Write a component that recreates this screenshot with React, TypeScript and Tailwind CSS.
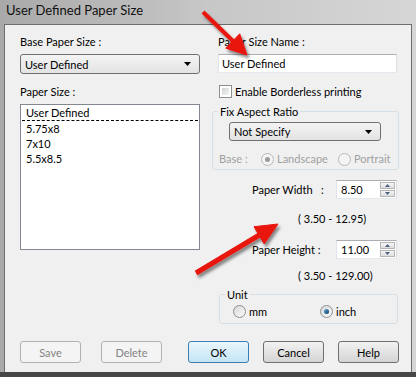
import React from 'react';

const font = { fontFamily: 'Lato, "Noto Sans", sans-serif' };

function DownTriangle() {
  return (
    <svg width="7" height="4" viewBox="0 0 7 4">
      <polygon points="0,0 7,0 3.5,4" fill="#000" />
    </svg>
  );
}

function ComboBox({ value, className }: { value: string; className: string }) {
  return (
    <div
      className={`flex items-center justify-between rounded-[3px] border border-[#707070] bg-gradient-to-b from-[#f4f4f4] to-[#e3e3e3] pl-[4px] pr-[8px] ${className}`}
    >
      <span className="leading-[15px]">{value}</span>
      <DownTriangle />
    </div>
  );
}

function Radio({ checked, disabled }: { checked?: boolean; disabled?: boolean }) {
  return (
    <span
      className={`flex h-[13px] w-[13px] shrink-0 items-center justify-center rounded-full border ${
        disabled ? 'border-[#b8b8b8] bg-[#f4f4f4]' : 'border-[#8e8f8f] bg-gradient-to-br from-[#d6d8da] to-[#fbfbfb]'
      }`}
    >
      {checked && (
        <span
          className={`h-[5px] w-[5px] rounded-full ${
            disabled ? 'bg-[#9a9a9a]' : 'bg-gradient-to-br from-[#5fa8d6] to-[#0f3f67]'
          }`}
        />
      )}
    </span>
  );
}

function SpinBox({ value }: { value: string }) {
  return (
    <div className="flex h-[19px] w-[61px] items-stretch border border-[#abadb3] border-b-[#e3e9ef] border-l-[#e2e3ea] border-r-[#dbdfe6] bg-white">
      <span className="flex-1 pl-[4px] leading-[17px]">{value}</span>
      <div className="my-[1px] mr-[1px] flex w-[15px] flex-col gap-[1px]">
        <div className="flex flex-1 items-center justify-center border border-[#b5b5b5] bg-gradient-to-b from-[#f6f6f6] to-[#dedede]">
          <svg width="5" height="3" viewBox="0 0 5 3">
            <polygon points="0,3 5,3 2.5,0" fill="#4d6185" />
          </svg>
        </div>
        <div className="flex flex-1 items-center justify-center border border-[#b5b5b5] bg-gradient-to-b from-[#f6f6f6] to-[#dedede]">
          <svg width="5" height="3" viewBox="0 0 5 3">
            <polygon points="0,0 5,0 2.5,3" fill="#4d6185" />
          </svg>
        </div>
      </div>
    </div>
  );
}

function Button({ label, disabled, focused }: { label: string; disabled?: boolean; focused?: boolean }) {
  let cls = 'border-[#707070] bg-gradient-to-b from-[#f2f2f2] to-[#d4d4d4] text-black';
  if (disabled) cls = 'border-[#adb2b5] bg-[#f4f4f4] text-[#838383]';
  if (focused) cls = 'border-[#3c7fb1] bg-gradient-to-b from-[#eaf6fd] to-[#c4e5f6] text-black';
  return (
    <div className={`flex h-[22px] w-[61px] items-center justify-center rounded-[3px] border leading-[15px] ${cls}`}>
      {label}
    </div>
  );
}

function Arrows() {
  return (
    <svg className="pointer-events-none absolute left-0 top-0" width="416" height="377" viewBox="0 0 416 377">
      <defs>
        <filter id="sh" x="-20%" y="-20%" width="140%" height="140%">
          <feDropShadow dx="2" dy="3" stdDeviation="1.5" floodColor="#000" floodOpacity="0.45" />
        </filter>
      </defs>
      <g filter="url(#sh)" fill="#e8140f" stroke="#e8140f">
        <line x1="203" y1="12" x2="234" y2="42" strokeWidth="4" />
        <polygon points="247,55 225.7,48.2 239.7,33.8" strokeWidth="1" />
        <line x1="196" y1="273" x2="261" y2="234" strokeWidth="5" />
        <polygon points="278,224 264.2,243.9 254,226.7" strokeWidth="1" />
      </g>
    </svg>
  );
}

export default function App() {
  return (
    <div
      className="relative flex h-[377px] w-[416px] flex-col overflow-hidden bg-gradient-to-r from-[#a9a9a9] via-[#c7c7c7] to-[#d6d6d6] text-[11px] text-black"
      style={font}
    >
      <div className="h-[24px] shrink-0 pl-[6px] pt-[3px] text-[13px] leading-[15px] text-[#111]">User Defined Paper Size</div>

      <div className="ml-[4px] flex h-[348px] w-[408px] flex-col border border-b-0 border-[#6d6d6d] bg-[#f0f0f0]">
        <div className="flex">
          {/* left column */}
          <div className="ml-[15px] flex w-[180px] flex-col">
            <div className="mt-[9px] leading-[15px]">Base Paper Size :</div>
            <ComboBox value="User Defined" className="mt-[5px] h-[20px]" />
            <div className="mt-[10px] leading-[15px]">Paper Size :</div>
            <div className="mt-[5px] h-[146px] border border-[#828790] bg-white">
              <div className="ml-[1px] mr-[1px] border-b border-dashed border-black pl-[4px] pt-[1px] leading-[14px]">
                User Defined
              </div>
              <div className="pl-[5px] leading-[15px]">5.75x8</div>
              <div className="pl-[5px] leading-[15px]">7x10</div>
              <div className="pl-[5px] leading-[15px]">5.5x8.5</div>
            </div>
          </div>

          {/* right column */}
          <div className="ml-[12px] flex w-[187px] flex-col">
            <div className="mt-[9px] pl-[6px] leading-[15px]">Paper Size Name :</div>
            <div className="ml-[6px] mt-[5px] h-[19px] w-[179px] border border-[#abadb3] border-b-[#e3e9ef] border-l-[#e2e3ea] border-r-[#dbdfe6] bg-white pl-[3px] leading-[17px]">
              User Defined
            </div>
            <div className="ml-[7px] mt-[11px] flex h-[15px] items-center gap-[3px]">
              <span className="h-[13px] w-[13px] border border-[#8e8f8f] bg-white p-[2px]">
                <span className="block h-full w-full bg-gradient-to-br from-[#cfd2d6] to-[#f4f4f4]" />
              </span>
              <span className="leading-[15px]">Enable Borderless printing</span>
            </div>

            <fieldset className="mt-[5px] rounded-[3px] border border-[#d5dfe5] pb-[2px]">
              <legend className="ml-[5px] px-[2px] leading-[15px]">Fix Aspect Ratio</legend>
              <ComboBox value="Not Specify" className="ml-[16px] mt-[3px] h-[19px] w-[152px]" />
              <div className="mt-[11px] flex h-[15px] items-center text-[#a0a0a0]">
                <span className="w-[48px] pl-[6px]">Base :</span>
                <div className="flex w-[77px] items-center gap-[3px]">
                  <Radio checked disabled />
                  <span>Landscape</span>
                </div>
                <div className="flex items-center gap-[3px]">
                  <Radio disabled />
                  <span>Portrait</span>
                </div>
              </div>
            </fieldset>

            <div className="mt-[10px] flex items-center">
              <span className="w-[124px] pl-[40px] leading-[15px]">Paper Width&nbsp;&nbsp;&nbsp;:</span>
              <SpinBox value="8.50" />
            </div>
            <div className="ml-[86px] mt-[12px] leading-[15px]">( 3.50 - 12.95)</div>

            <div className="mt-[14px] flex items-center">
              <span className="w-[124px] pl-[40px] leading-[15px]">Paper Height :</span>
              <SpinBox value="11.00" />
            </div>
            <div className="ml-[86px] mt-[9px] leading-[15px]">( 3.50 - 129.00)</div>

            <fieldset className="ml-[7px] mt-[4px] w-[179px] rounded-[3px] border border-[#d5dfe5] pb-[4px]">
              <legend className="ml-[5px] px-[2px] leading-[15px]">Unit</legend>
              <div className="mt-[2px] flex items-center">
                <div className="ml-[13px] flex w-[87px] items-center gap-[3px]">
                  <Radio />
                  <span className="leading-[15px]">mm</span>
                </div>
                <div className="flex items-center gap-[3px]">
                  <Radio checked />
                  <span className="leading-[15px]">inch</span>
                </div>
              </div>
            </fieldset>
          </div>
        </div>

        <div className="mt-[17px] flex pl-[15px]">
          <Button label="Save" disabled />
          <div className="ml-[20px]">
            <Button label="Delete" disabled />
          </div>
          <div className="ml-[26px]">
            <Button label="OK" focused />
          </div>
          <div className="ml-[14px]">
            <Button label="Cancel" />
          </div>
          <div className="ml-[14px]">
            <Button label="Help" />
          </div>
        </div>
      </div>
      <div className="h-[5px] bg-[#474747]" />

      <Arrows />
    </div>
  );
}
